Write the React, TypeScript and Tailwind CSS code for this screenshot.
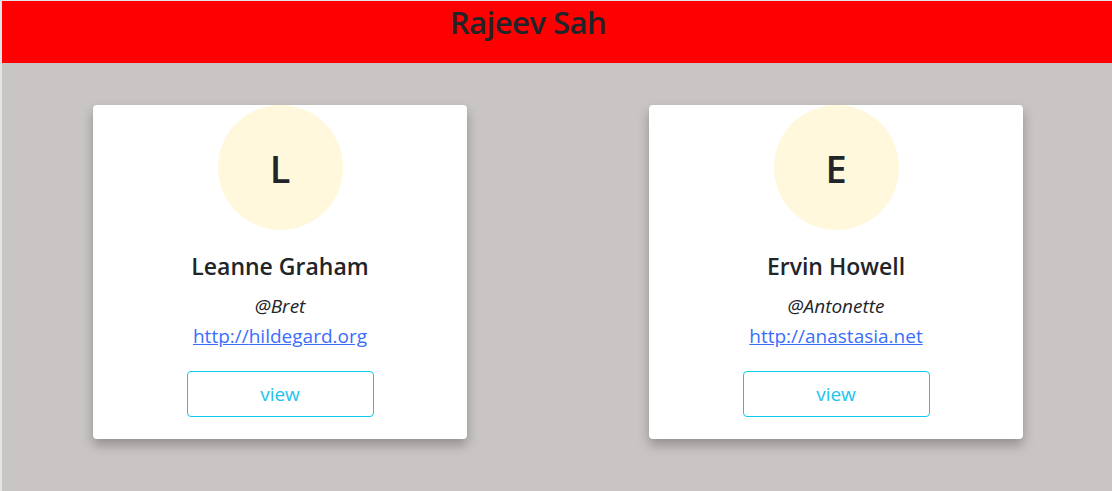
import React from 'react';

type User = {
  id: number;
  name: string;
  username: string;
  website: string;
};

const users: User[] = [
  { id: 1, name: 'Leanne Graham', username: 'Bret', website: 'hildegard.org' },
  { id: 2, name: 'Ervin Howell', username: 'Antonette', website: 'anastasia.net' },
];

const UserCard: React.FC<{ user: User }> = ({ user }) => (
  <div
    className="
      w-[374px]
      mx-auto
      bg-white
      rounded-[4px]
      shadow-[0_6px_12px_rgba(0,0,0,0.28)]
      flex
      flex-col
      items-center
      pb-[22px]
    "
  >
    <div className="w-[125px] h-[125px] rounded-full bg-[#fff8dc] flex items-center justify-center">
      <span className="text-[38px] font-semibold text-[#212529] leading-none">
        {user.name[0]}
      </span>
    </div>

    <h5 className="mt-[21px] text-[23px] font-semibold text-[#212529] leading-[30px]">
      {user.name}
    </h5>
    <p className="mt-[13px] text-[19px] italic text-[#212529] leading-[24px]">
      @{user.username}
    </p>
    <a
      href="#"
      className="mt-[5px] text-[19px] text-[#3b6dfd] underline leading-[26px]"
    >
      http://{user.website}
    </a>

    <button
      className="
        mt-[22px]
        w-[187px]
        h-[46px]
        border
        border-[#0dcaf0]
        rounded-[4px]
        text-[19px]
        text-[#22c3ee]
        bg-white
      "
    >
      view
    </button>
  </div>
);

export default function App() {
  return (
    <div
      className="
        min-h-screen
        bg-[#c9c5c4]
        border-l-2
        border-t
        border-[#e4e4e4]
        font-['Open_Sans','Noto_Sans',sans-serif]
        overflow-hidden
      "
    >
      <header className="h-[62px] bg-[#ff0000] flex justify-center pr-[58px]">
        <h1 className="text-[31px] font-semibold text-[#212529] leading-[42px] tracking-[-0.5px]">
          Rajeev Sah
        </h1>
      </header>

      <div className="grid grid-cols-[556px_556px] pt-[42px] pb-[53px]">
        {users.map((user) => (
          <UserCard key={user.id} user={user} />
        ))}
      </div>
    </div>
  );
}
